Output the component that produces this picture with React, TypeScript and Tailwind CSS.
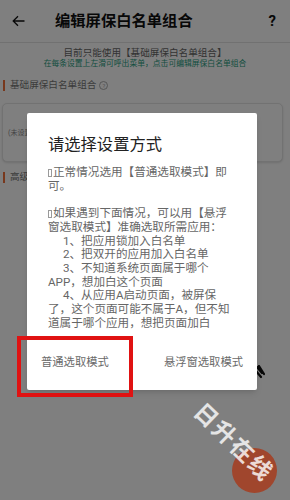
import React from 'react';

const Tofu = () => (
  <span className="inline-block w-[4px] h-[8px] mr-[1px] align-middle border border-[#9a9a9a]" />
);

export default function App() {
  const body = [
    { t: '正常情况选用【普通选取模式】即', tofu: true },
    { t: '可。' },
    { t: '\u00a0' },
    { t: '如果遇到下面情况，可以用【悬浮', tofu: true },
    { t: '窗选取模式】准确选取所需应用：' },
    { t: '1、把应用锁加入白名单', indent: true },
    { t: '2、把双开的应用加入白名单', indent: true },
    { t: '3、不知道系统页面属于哪个', indent: true },
    { t: 'APP，想加白这个页面' },
    { t: '4、从应用A启动页面，被屏保', indent: true },
    { t: '了，这个页面可能不属于A，但不知' },
    { t: '道属于哪个应用，想把页面加白' },
  ];

  return (
    <div className="relative w-[290px] h-[500px] overflow-hidden bg-white font-['Roboto','Noto_Sans_CJK_SC',sans-serif]">
      {/* Header */}
      <div className="h-[43px] flex items-center border-b border-[#e2e2e2]">
        <svg className="ml-[12px] w-[13px] h-[12px]" viewBox="0 0 13 12" fill="none" stroke="#111" strokeWidth="1.3">
          <path d="M12.5 6H1.2M6 1.2L1.2 6 6 10.8" />
        </svg>
        <div className="ml-[30px] text-[15.3px] leading-[20px] font-bold text-[#111]">编辑屏保白名单组合</div>
        <div className="ml-auto mr-[14px] text-[15px] font-bold text-[#111]">?</div>
      </div>

      {/* Page content */}
      <div className="pt-[4px] text-center text-[9.6px] leading-[12px] text-[#666]">目前只能使用【基础屏保白名单组合】</div>
      <div className="text-center text-[7.8px] leading-[10px] text-[#1f9c80]">在每条设置上左滑可呼出菜单，点击可编辑屏保白名单组合</div>

      <div className="mt-[9.5px] flex items-center h-[14px]">
        <div className="ml-[3px] w-[2px] h-[11px] bg-[#f0703a]" />
        <div className="ml-[5px] text-[9.6px] text-[#777]">基础屏保白名单组合</div>
        <div className="ml-[3px] w-[9px] h-[9px] rounded-full border border-[#aaa] text-[6px] leading-[7px] text-center text-[#aaa]">?</div>
      </div>

      <div className="mt-[10px] ml-[2px] w-[281px] h-[59px] rounded-[5px] border border-[#e4e4e4] bg-white shadow-sm flex items-center">
        <div className="ml-[5px] mt-[2px] text-[7px] text-[#888]">(未设置屏保白名单)</div>
      </div>

      <div className="mt-[9px] flex items-center h-[14px]">
        <div className="ml-[3px] w-[2px] h-[11px] bg-[#f0703a]" />
        <div className="ml-[5px] text-[9.6px] text-[#777]">高级屏保白名单组合</div>
      </div>

      <svg className="absolute left-[255px] top-[365px] w-[10px] h-[14px]" viewBox="0 0 10 14" fill="none" stroke="#111" strokeWidth="2.2" strokeLinecap="round">
        <path d="M2 2l5 6M4 1l5 8M1 6l5 6" />
      </svg>

      {/* Dim overlay */}
      <div className="absolute inset-0 bg-black/50" />

      {/* Dialog */}
      <div className="absolute left-[27px] top-[113px] w-[230px] bg-white rounded-[2px] shadow-md pt-[21px] pb-[2px]">
        <div className="pl-[21px] text-[16.3px] leading-[22px] text-[#222]">请选择设置方式</div>
        <div className="mt-[10px] pl-[21px] pr-[8px] text-[11.6px] leading-[13.7px] text-[#666]">
          {body.map((l, i) => (
            <div key={i} className={l.indent ? 'whitespace-nowrap pl-[15px]' : 'whitespace-nowrap'}>
              {l.tofu && <Tofu />}
              {l.t}
            </div>
          ))}
        </div>
        <div className="mt-[8px] h-[50px] px-[14px] flex items-center justify-between text-[11.3px] text-[#6a6a6a]">
          <span>普通选取模式</span>
          <span>悬浮窗选取模式</span>
        </div>
      </div>

      {/* Red highlight box */}
      <div className="absolute left-[17px] top-[336px] w-[116px] h-[61px] border-[4px] border-[#e01212]" />

      {/* Floating button */}
      <div className="absolute left-[232px] top-[448px] w-[45px] h-[45px] rounded-full bg-[#a0462d] blur-[0.5px]" />

      {/* Watermark */}
      <div className="absolute left-[233px] top-[443px] -translate-x-1/2 -translate-y-1/2 rotate-[44deg] whitespace-nowrap text-[23px] leading-[26px] tracking-[2px] font-bold text-white/80">
        日升在线
      </div>
    </div>
  );
}
